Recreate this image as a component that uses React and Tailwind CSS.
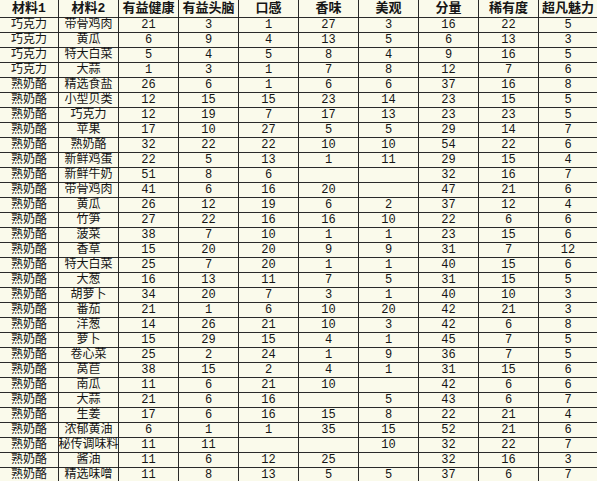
import React from "react";

const headers = ["材料1", "材料2", "有益健康", "有益头脑", "口感", "香味", "美观", "分量", "稀有度", "超凡魅力"];

const rows = [
  ["巧克力", "带骨鸡肉", 21, 3, 1, 27, 3, 16, 22, 5],
  ["巧克力", "黄瓜", 6, 9, 4, 13, 5, 6, 13, 3],
  ["巧克力", "特大白菜", 5, 4, 5, 8, 4, 9, 16, 5],
  ["巧克力", "大蒜", 1, 3, 1, 7, 8, 12, 7, 6],
  ["熟奶酪", "精选食盐", 26, 6, 1, 6, 6, 37, 16, 8],
  ["熟奶酪", "小型贝类", 12, 15, 15, 23, 14, 23, 15, 5],
  ["熟奶酪", "巧克力", 12, 19, 7, 17, 13, 23, 23, 5],
  ["熟奶酪", "苹果", 17, 10, 27, 5, 5, 29, 14, 7],
  ["熟奶酪", "熟奶酪", 32, 22, 22, 10, 10, 54, 22, 6],
  ["熟奶酪", "新鲜鸡蛋", 22, 5, 13, 1, 11, 29, 15, 4],
  ["熟奶酪", "新鲜牛奶", 51, 8, 6, "", "", 32, 16, 7],
  ["熟奶酪", "带骨鸡肉", 41, 6, 16, 20, "", 47, 21, 6],
  ["熟奶酪", "黄瓜", 26, 12, 19, 6, 2, 37, 12, 4],
  ["熟奶酪", "竹笋", 27, 22, 16, 16, 10, 22, 6, 6],
  ["熟奶酪", "菠菜", 38, 7, 10, 1, 1, 23, 15, 6],
  ["熟奶酪", "香草", 15, 20, 20, 9, 9, 31, 7, 12],
  ["熟奶酪", "特大白菜", 25, 7, 20, 1, 1, 40, 15, 6],
  ["熟奶酪", "大葱", 16, 13, 11, 7, 5, 31, 15, 5],
  ["熟奶酪", "胡萝卜", 34, 20, 7, 3, 1, 40, 10, 3],
  ["熟奶酪", "番茄", 21, 1, 6, 10, 20, 42, 21, 3],
  ["熟奶酪", "洋葱", 14, 26, 21, 10, 3, 42, 6, 8],
  ["熟奶酪", "萝卜", 15, 29, 15, 4, 1, 45, 7, 5],
  ["熟奶酪", "卷心菜", 25, 2, 24, 1, 9, 36, 7, 5],
  ["熟奶酪", "莴苣", 38, 15, 2, 4, 1, 31, 15, 6],
  ["熟奶酪", "南瓜", 11, 6, 21, 10, "", 42, 6, 6],
  ["熟奶酪", "大蒜", 21, 6, 16, "", 5, 43, 6, 7],
  ["熟奶酪", "生姜", 17, 6, 16, 15, 8, 22, 21, 4],
  ["熟奶酪", "浓郁黄油", 6, 1, 1, 35, 15, 52, 21, 6],
  ["熟奶酪", "秘传调味料", 11, 11, "", "", 10, 32, 22, 7],
  ["熟奶酪", "酱油", 11, 6, 12, 25, "", 32, 16, 3],
  ["熟奶酪", "精选味噌", 11, 8, 13, 5, 5, 37, 6, 7],
];

export default function App() {
  return (
    <div className="w-[597px] h-[481px] overflow-hidden bg-[#fafaeb] text-[#151515] font-['Liberation_Mono','Noto_Sans_CJK_SC',monospace]">
      <div className="grid grid-cols-[59px_repeat(8,60px)_1fr]">
        {headers.map((h, i) => (
          <div
            key={"h" + i}
            className={`h-[18px] flex items-center justify-center border-b border-[#2a2a2a] text-[13px] leading-[16px] font-bold whitespace-nowrap ${i < 9 ? "border-r" : ""}`}
          >
            {h}
          </div>
        ))}
        {rows.map((r, ri) =>
          r.map((c, ci) => (
            <div
              key={ri + "-" + ci}
              className={`h-[15px] flex items-center justify-center border-b border-[#2a2a2a] text-[12px] leading-[14px] whitespace-nowrap overflow-visible ${ci < 9 ? "border-r" : ""}`}
            >
              {c}
            </div>
          ))
        )}
      </div>
    </div>
  );
}
